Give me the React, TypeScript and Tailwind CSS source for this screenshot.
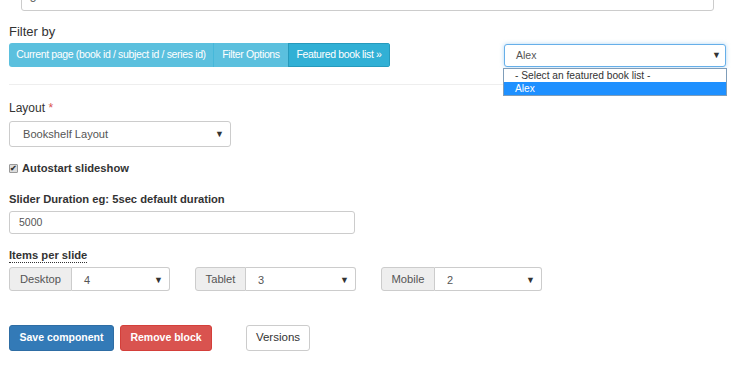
import React from "react";

const font = { fontFamily: '"Liberation Sans", Arial, sans-serif' };

function Caret() {
  return <span className="text-[9px] leading-none text-[#333]">▼</span>;
}

function FakeSelect({ value, className }: { value: string; className: string }) {
  return (
    <div
      className={`flex items-center justify-between border border-[#ccc] bg-white text-[#555] ${className}`}
    >
      <span>{value}</span>
      <Caret />
    </div>
  );
}

function AddonGroup({
  label,
  value,
  addonW,
}: {
  label: string;
  value: string;
  addonW: string;
}) {
  return (
    <div className="flex h-[24px] w-[161px]">
      <div
        className={`flex items-center justify-center rounded-l-[3px] border border-[#ccc] bg-[#eee] text-[11.2px] text-[#555] ${addonW}`}
      >
        {label}
      </div>
      <FakeSelect
        value={value}
        className="flex-1 rounded-r-[3px] border-l-0 pl-[12px] pr-[6px] pt-[2px] text-[11px]"
      />
    </div>
  );
}

export default function App() {
  return (
    <div className="h-[368px] w-[744px] overflow-hidden bg-white text-[#333]" style={font}>
      <div className="relative ml-[21px] -mt-[19px] h-[30px] w-[693px] rounded-[3px] border border-[#ccc] px-[8px] text-[11px] text-[#555]">
        <span className="relative top-[8px]">5</span>
      </div>

      <div className="px-[9px]">
        <div className="mt-[12px] text-[13px] leading-[17px]">Filter by</div>

        <div className="mt-[3px] flex items-start">
          <div className="flex h-[24px] overflow-hidden whitespace-nowrap rounded-[3px] text-[10.5px] tracking-[-0.35px] text-white">
            <div className="flex w-[205px] items-center justify-center border-r border-[#46b8da] bg-[#5bc0de]">
              Current page (book id / subject id / series id)
            </div>
            <div className="flex w-[74px] items-center justify-center bg-[#5bc0de]">
              Filter Options
            </div>
            <div className="flex w-[102px] items-center justify-center border border-[#269abc] bg-[#31b0d5]">
              Featured book list »
            </div>
          </div>

          <div className="relative ml-auto mr-[9px] mt-[1px] w-[222px]">
            <div className="flex h-[23px] items-center justify-between rounded-[3px] border border-[#66afe9] bg-white pl-[11px] pr-[4px] text-[10.5px] text-[#555] shadow-[0_0_4px_rgba(102,175,233,0.5)]">
              <span>Alex</span>
              <Caret />
            </div>
            <div className="absolute left-[-1px] top-[24px] w-[224px] border border-[#7f9db9] bg-white text-[10.2px] leading-[13px]">
              <div className="pl-[11px] text-[#333]">- Select an featured book list -</div>
              <div className="bg-[#1e90ff] pl-[11px] text-white">Alex</div>
            </div>
          </div>
        </div>

        <div className="mt-[17px] mr-[9px] border-t border-[#eee]" />

        <div className="mt-[15px] text-[12px] leading-[17px]">
          Layout <span className="text-[#d9534f]">*</span>
        </div>
        <FakeSelect
          value="Bookshelf Layout"
          className="mt-[4px] h-[26px] w-[222px] rounded-[3px] pl-[13px] pr-[6px] text-[11.1px]"
        />

        <div className="mt-[13px] flex h-[17px] items-center gap-[4px] text-[11.2px] font-bold">
          <span className="flex h-[9px] w-[9px] items-center justify-center rounded-[1px] border border-[#999] bg-[#ddd] text-[8px] leading-none text-[#333]">
            ✔
          </span>
          Autostart slideshow
        </div>

        <div className="mt-[14px] text-[11.2px] font-bold leading-[17px]">
          Slider Duration eg: 5sec default duration
        </div>
        <div className="mt-[3px] flex h-[23px] w-[346px] items-center rounded-[3px] border border-[#ccc] pl-[9px] text-[10.5px] text-[#555]">
          5000
        </div>

        <div className="mt-[14px] inline-block border-b border-dotted border-[#333] text-[11.2px] font-bold leading-[14px]">
          Items per slide
        </div>
        <div className="mt-[1px] flex gap-[25px]">
          <AddonGroup label="Desktop" value="4" addonW="w-[63px]" />
          <AddonGroup label="Tablet" value="3" addonW="w-[51px]" />
          <AddonGroup label="Mobile" value="2" addonW="w-[54px]" />
        </div>

        <div className="mt-[34px] flex">
          <div className="flex h-[26px] w-[105px] items-center justify-center rounded-[3px] border border-[#2e6da4] bg-[#337ab7] text-[10.5px] font-bold text-white">
            Save component
          </div>
          <div className="ml-[6px] flex h-[26px] w-[92px] items-center justify-center rounded-[3px] border border-[#d43f3a] bg-[#d9534f] text-[10.5px] font-bold text-white">
            Remove block
          </div>
          <div className="ml-[34px] flex h-[26px] w-[64px] items-center justify-center rounded-[3px] border border-[#ccc] bg-white text-[11.5px] text-[#333]">
            Versions
          </div>
        </div>
      </div>
    </div>
  );
}
